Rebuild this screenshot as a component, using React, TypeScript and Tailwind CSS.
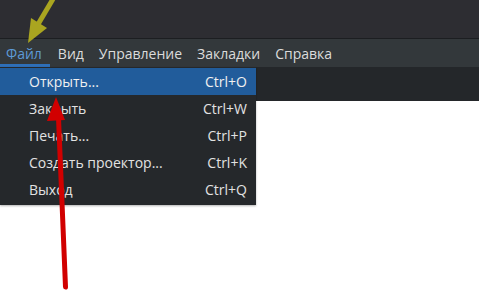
import React from "react";

const menus = ["Файл", "Вид", "Управление", "Закладки", "Справка"];
const items: [string, string][] = [
  ["Открыть...", "Ctrl+O"],
  ["Закрыть", "Ctrl+W"],
  ["Печать...", "Ctrl+P"],
  ["Создать проектор...", "Ctrl+K"],
  ["Выход", "Ctrl+Q"],
];

export default function App() {
  return (
    <div
      className="relative w-[479px] h-[307px] overflow-hidden bg-white"
      style={{ fontFamily: '"Open Sans", "Noto Sans", sans-serif' }}
    >
      <div className="h-[38px] bg-[#2d2d32]" />
      <div className="h-[1px] bg-[#1c1e21]" />
      <div className="h-[28px] bg-[#33383b] flex items-stretch text-[14px] text-[#dcdcdc]">
        {menus.map((m, i) => (
          <div
            key={m}
            className={
              i === 0
                ? "flex items-center pl-[6px] pr-[8px] text-[#5d9ad6] border-b-[3px] border-[#2e6fb8] pt-[3px]"
                : "flex items-center pl-[8px] pr-[7px]"
            }
          >
            {m}
          </div>
        ))}
      </div>
      <div className="h-[34px] bg-[#24272a]" />

      <div className="absolute left-0 top-[67px] w-[256px] h-[138px] bg-[#25282b] pt-[1px] shadow-[0_1px_2px_rgba(0,0,0,0.3)] text-[14px] text-[#e2e2e2]">
        {items.map(([label, key], i) => (
          <div
            key={label}
            className={
              "h-[27px] flex items-center justify-between pl-[29px] pr-[9px] " +
              (i === 0 ? "bg-[#215c9b] text-[#f0f0f0]" : "")
            }
          >
            <span>{label}</span>
            <span>{key}</span>
          </div>
        ))}
      </div>

      <svg className="absolute left-0 top-0" width="479" height="307" viewBox="0 0 479 307">
        <line x1="53" y1="-1" x2="37" y2="26" stroke="#aaa520" strokeWidth="5" />
        <polygon points="28,43 31,18 47,28" fill="#aaa520" />
        <line x1="65.5" y1="287" x2="58.5" y2="118" stroke="#d10000" strokeWidth="5" strokeLinecap="round" />
        <polygon points="56,97 47,121 65,120" fill="#d10000" />
      </svg>
    </div>
  );
}
